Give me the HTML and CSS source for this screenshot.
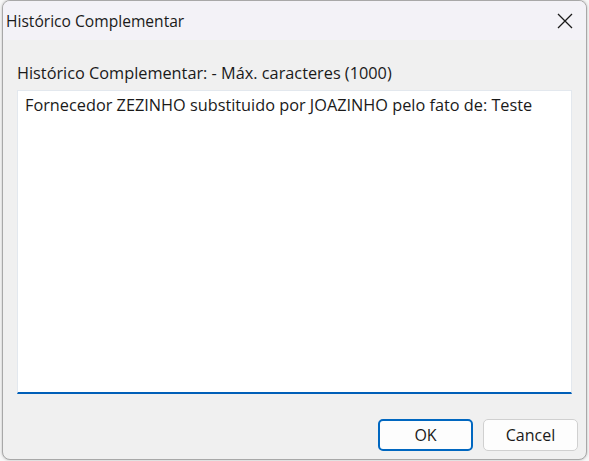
FILE: index.html
```html
<!DOCTYPE html>
<html lang="pt">
<head>
<meta charset="utf-8">
<link rel="stylesheet" href="styles.css">
</head>
<body>
<div class="window">
  <div class="titlebar">
    <span class="title">Histórico Complementar</span>
    <span class="close" aria-label="Fechar">
      <svg width="16" height="16" viewBox="0 0 16 16"><path d="M1 1 L15 15 M15 1 L1 15" stroke="#1a1a1a" stroke-width="1.3" fill="none"/></svg>
    </span>
  </div>
  <div class="content">
    <div class="label">Histórico Complementar: - Máx. caracteres (1000)</div>
    <div class="memo">Fornecedor ZEZINHO substituido por JOAZINHO pelo fato de: Teste</div>
    <div class="buttons">
      <button class="btn btn-default">OK</button>
      <button class="btn">Cancel</button>
    </div>
  </div>
</div>
</body>
</html>
```
FILE: styles.css
```css
html, body {
  margin: 0;
  padding: 0;
  background: #f7f7f7;
  width: 589px;
  height: 461px;
  overflow: hidden;
}
body {
  font-family: "Open Sans", "Noto Sans", sans-serif;
  font-size: 16.3px;
  color: #1a1a1a;
}
.window {
  margin-left: 2px;
  width: 585px;
  height: 460px;
  box-sizing: border-box;
  border: 1px solid #a8a8a8;
  border-radius: 8px;
  overflow: hidden;
  display: flex;
  flex-direction: column;
  background: #f0f0f0;
  box-shadow: 0 0 3px rgba(0,0,0,0.25);
}
.titlebar {
  height: 39px;
  flex: none;
  background: #f3f2f7;
  display: flex;
  align-items: center;
  justify-content: space-between;
  padding-left: 3px;
  padding-right: 13px;
}
.title {
  font-size: 15.6px;
  color: #1a1a1a;
}
.close {
  display: flex;
  width: 16px;
  height: 16px;
}
.content {
  flex: 1;
  display: flex;
  flex-direction: column;
  padding: 23px 14px 8px 14px;
}
.label {
  line-height: 20px;
  color: #1a1a1a;
}
.memo {
  margin-top: 7px;
  height: 304px;
  box-sizing: border-box;
  background: #fff;
  border: 1px solid #e3e8ee;
  border-bottom: 2px solid #005fb8;
  padding: 4px 7px;
  line-height: 20px;
}
.buttons {
  display: flex;
  justify-content: flex-end;
  gap: 10px;
  margin-top: 25px;
  margin-right: -6px;
}
.btn {
  width: 95px;
  height: 32px;
  box-sizing: border-box;
  font-family: inherit;
  font-size: 16px;
  color: #1a1a1a;
  background: #fdfdfd;
  border: 1px solid #d0d0d0;
  border-radius: 5px;
  padding: 0;
}
.btn-default {
  border: 2px solid #0067c0;
}
```
